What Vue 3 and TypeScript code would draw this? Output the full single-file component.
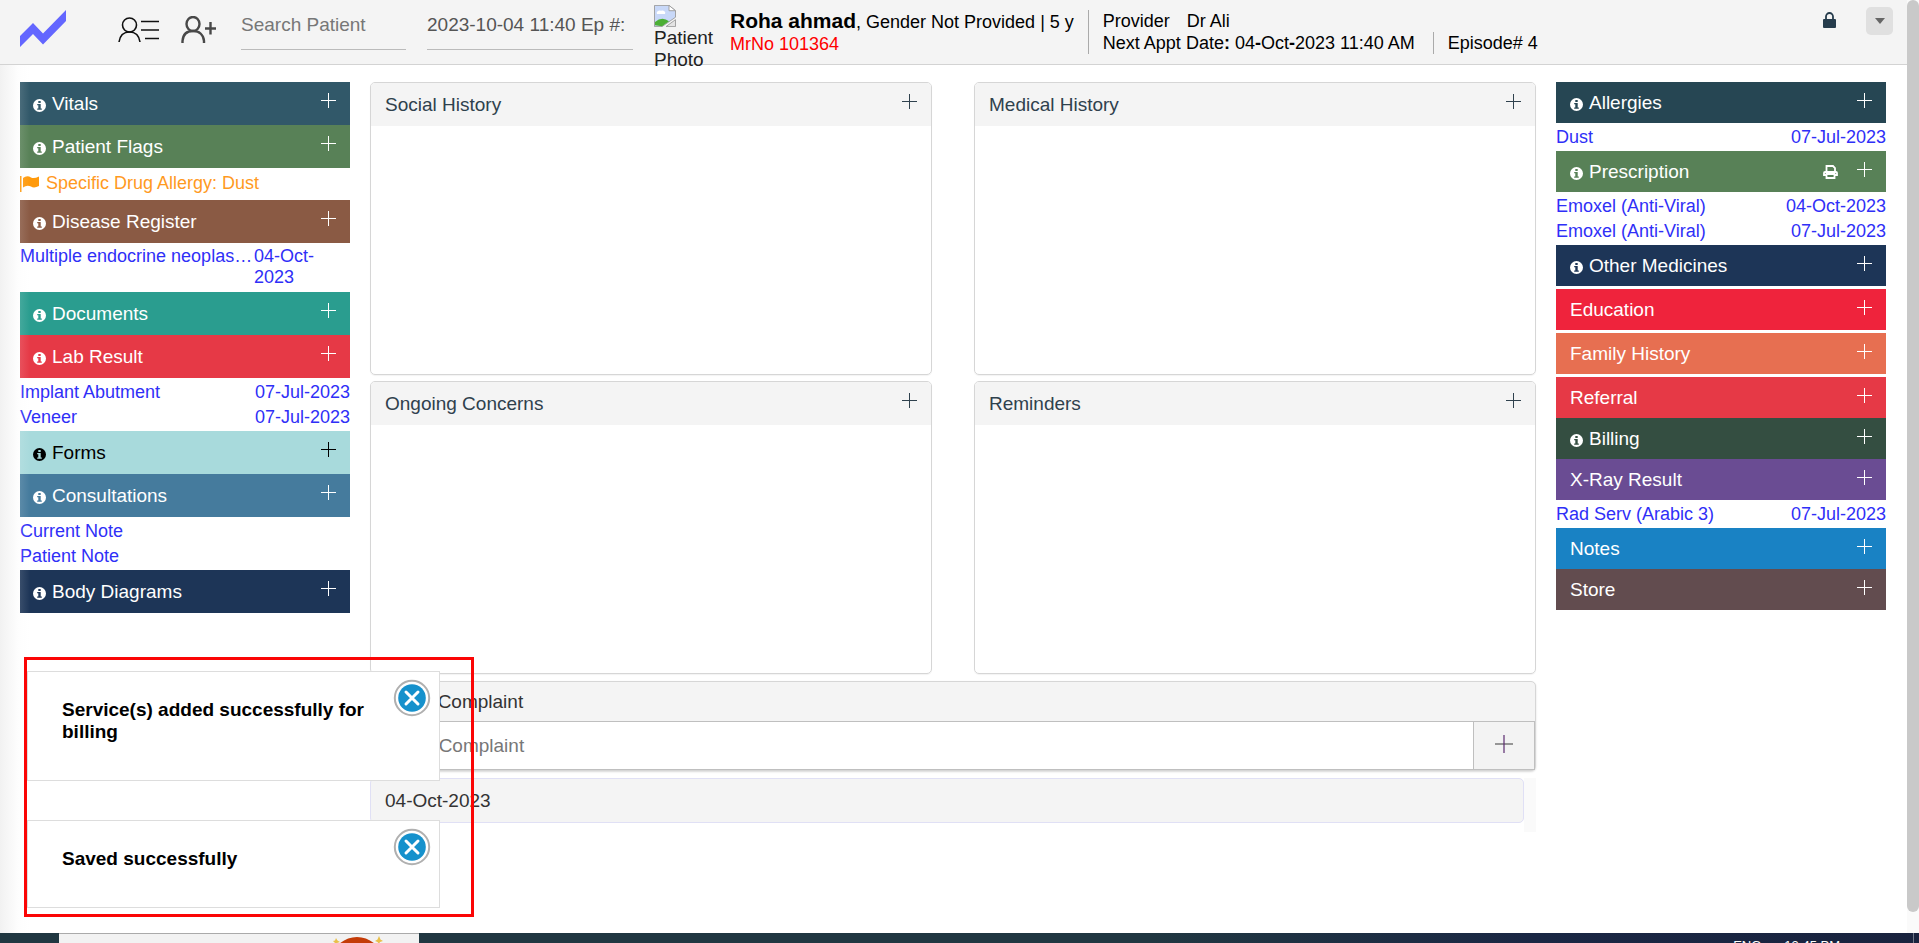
<script setup lang="ts">
import { ref } from 'vue'

interface Entry { name: string; date?: string; wrap?: boolean; flag?: boolean }
interface Section {
  title: string
  color: string
  info?: boolean
  dark?: boolean
  print?: boolean
  gap?: boolean
  entries?: Entry[]
}

const left: Section[] = [
  { title: 'Vitals', color: '#315869', info: true },
  { title: 'Patient Flags', color: '#588157', info: true, entries: [{ name: 'Specific Drug Allergy: Dust', flag: true }] },
  { title: 'Disease Register', color: '#8a5a44', info: true, entries: [{ name: 'Multiple endocrine neoplas…', date: '04-Oct-2023', wrap: true }] },
  { title: 'Documents', color: '#2a9d8f', info: true },
  { title: 'Lab Result', color: '#e63946', info: true, entries: [{ name: 'Implant Abutment', date: '07-Jul-2023' }, { name: 'Veneer', date: '07-Jul-2023' }] },
  { title: 'Forms', color: '#a8dadc', info: true, dark: true },
  { title: 'Consultations', color: '#457b9d', info: true, entries: [{ name: 'Current Note' }, { name: 'Patient Note' }] },
  { title: 'Body Diagrams', color: '#1d3557', info: true },
]

const right: Section[] = [
  { title: 'Allergies', color: '#264653', info: true, entries: [{ name: 'Dust', date: '07-Jul-2023' }] },
  { title: 'Prescription', color: '#588157', info: true, print: true, entries: [{ name: 'Emoxel (Anti-Viral)', date: '04-Oct-2023' }, { name: 'Emoxel (Anti-Viral)', date: '07-Jul-2023' }] },
  { title: 'Other Medicines', color: '#1d3557', info: true, gap: true },
  { title: 'Education', color: '#ef233c', gap: true },
  { title: 'Family History', color: '#e76f51', gap: true },
  { title: 'Referral', color: '#e63946' },
  { title: 'Billing', color: '#344e41', info: true },
  { title: 'X-Ray Result', color: '#6a4c93', entries: [{ name: 'Rad Serv (Arabic 3)', date: '07-Jul-2023' }] },
  { title: 'Notes', color: '#1982c4' },
  { title: 'Store', color: '#624c4f' },
]

const columns = [
  { side: 'left', sections: left },
  { side: 'right', sections: right },
]
const panels = ['Social History', 'Medical History', 'Ongoing Concerns', 'Reminders']
const toasts = ref<string[]>(['Service(s) added successfully for billing', 'Saved successfully'])
const search = ref('')
const episode = ref('2023-10-04 11:40 Ep #:')
const complaint = ref('')
</script>

<template>
  <div class="screen">
    <div class="app">
      <header class="topbar">
        <a href="#" class="logo" aria-label="Home">
          <svg width="46" height="37" viewBox="0 0 46 37"><path d="M0 26 13 13 23 23.500 46 0V11L23 34.500 13 24 0 37Z" fill="#6366ff" /></svg>
        </a>
        <button class="plain list" aria-label="Patient list">
          <svg width="42" height="26" viewBox="0 0 42 26" fill="none" stroke="#111" stroke-width="1.600"><ellipse cx="11.500" cy="8" rx="7" ry="7" /><path d="M1 25C2 18 6 15 11.500 15S21 18 22 25M23 4.500H41M23 13H41M27 21.500H41" /></svg>
        </button>
        <button class="plain add" aria-label="Add patient">
          <svg width="36" height="28" viewBox="0 0 36 28" fill="none" stroke="#484848" stroke-width="2.400"><ellipse cx="12" cy="8" rx="6.500" ry="7" /><path d="M1.500 27V25C2 18.500 6 15 12 15S22.500 18.500 23 25V27M29.500 6V18.500M24 12.500H35" /></svg>
        </button>
        <input v-model="search" class="field search" type="text" placeholder="Search Patient" aria-label="Search Patient" />
        <input v-model="episode" class="field episode" type="text" aria-label="Episode" />
        <div class="photo" role="img" aria-label="Patient Photo">
          <svg width="22" height="22" viewBox="0 0 22 27" preserveAspectRatio="none"><path d="M.5.500H15L21.500 7V15L8 26.500H.5Z" fill="#c8d8f8" stroke="#9a9a9a" /><path d="M15 .500V7H21.500Z" fill="#fff" stroke="#9a9a9a" /><path d="M3 11a3 3 0 0 1 4-4 3 3 0 0 1 4 4Z" fill="#fff" /><path d="M1 25V21Q8 13 15 20L8 26Z" fill="#4caf35" /><path d="M21.500 18V26.500H12Z" fill="#e4e4e4" stroke="#9a9a9a" /></svg>
          <span>Patient Photo</span>
        </div>
        <div class="patient">
          <div><strong>Roha ahmad</strong>, Gender Not Provided | 5 y</div>
          <div class="mr">MrNo 101364</div>
        </div>
        <div class="visit">
          <div><span class="provider">Provider</span>Dr Ali</div>
          <div class="line"><span>Next Appt Date<b>:</b> 04<b>-</b>Oct<b>-</b>2023 11:40 AM</span><span class="ep">Episode# 4</span></div>
        </div>
        <button class="plain lock" aria-label="Lock">
          <svg width="13" height="16" viewBox="0 0 13 16"><path d="M3 8V4.500a3.500 3.500 0 0 1 7 0V8" fill="none" stroke="#263c4c" stroke-width="1.800" /><rect y="7" width="13" height="9" rx="1" fill="#263c4c" /></svg>
        </button>
        <button class="menu" aria-label="Menu"><svg width="10" height="6" viewBox="0 0 10 6"><path d="M0 0H10L5 6Z" fill="#666" /></svg></button>
      </header>

      <main class="body">
        <aside v-for="col in columns" :key="col.side" :class="['side', col.side]">
          <section v-for="s in col.sections" :key="s.title" :class="{ gap: s.gap }">
            <h2 :class="['bar', { dark: s.dark }]" :style="{ backgroundColor: s.color }">
              <svg v-if="s.info" class="info" width="13" height="13" viewBox="0 0 13 13"><path fill="currentColor" fill-rule="evenodd" d="M6.500 0a6.500 6.500 0 1 0 0 13 6.500 6.500 0 0 0 0-13ZM5.300 2h2.400v1.900H5.300ZM4.200 5h3.500v4.500h1.100v1.300H4.200V9.500h1.100V6.300H4.200Z" /></svg>
              <span class="title">{{ s.title }}</span>
              <button v-if="s.print" class="plain" aria-label="Print">
                <svg width="15" height="14" viewBox="0 0 15 14" fill="none" stroke="currentColor" stroke-width="1.800"><path d="M3.500 7V1H10L12 3V7M3.500 10H1V8Q1 7 2 7H13Q14 7 14 8V10H12M3.500 9H11.500V13H3.500Z" /></svg>
              </button>
              <button class="plain plus" :aria-label="'Add ' + s.title"><svg width="15" height="15" viewBox="0 0 15 15"><path d="M7 0H8V7H15V8H8V15H7V8H0V7H7Z" fill="currentColor" /></svg></button>
            </h2>
            <ul v-if="s.entries" class="entries">
              <li v-for="(e, i) in s.entries" :key="i" :class="{ wrap: e.wrap, flagged: e.flag }">
                <svg v-if="e.flag" width="19" height="17" viewBox="0 0 19 17"><path d="M0 1H1.500V17H0ZM3 3Q7 0 11 2.500 14 4 19 1.500V11Q14 13.500 11 11.500 7 9.500 3 12.500Z" fill="#ff9a0c" /></svg>
                <a href="#" class="name">{{ e.name }}</a>
                <a v-if="e.date" href="#" class="date">{{ e.date }}</a>
              </li>
            </ul>
          </section>
        </aside>

        <div class="center">
          <div class="panels">
            <section v-for="p in panels" :key="p" class="panel">
              <h2>{{ p }}<button class="plain plus" :aria-label="'Add ' + p"><svg width="15" height="15" viewBox="0 0 15 15"><path d="M7 0H8V7H15V8H8V15H7V8H0V7H7Z" fill="currentColor" /></svg></button></h2>
            </section>
          </div>
          <section class="complaint">
            <label for="complaint">Chief Complaint</label>
            <div class="entry">
              <input id="complaint" v-model="complaint" type="text" placeholder="Chief Complaint" />
              <button aria-label="Add complaint"><svg width="18" height="18" viewBox="0 0 18 18"><path d="M0 9H18" stroke="#777" stroke-width="1.500" /><path d="M9 0V18" stroke="#5b2b70" stroke-width="1.200" /></svg></button>
            </div>
          </section>
          <div class="history"><div class="day">04-Oct-2023</div></div>
        </div>
      </main>
      <div class="scroll"><div class="thumb"></div></div>
      <div class="shade"></div>
      <div class="notices">
        <div v-for="(t, i) in toasts" :key="t" class="toast" role="status">
          <p>{{ t }}</p>
          <button class="plain close" aria-label="Close" @click="toasts.splice(i, 1)">
            <svg width="38" height="38" viewBox="0 0 38 38"><circle cx="19" cy="19" r="17.200" fill="#fff" stroke="#b0b0b0" stroke-width="2" /><circle cx="19" cy="19" r="13.800" fill="#1691cc" /><path d="M13 13 25 25M25 13 13 25" stroke="#fff" stroke-width="3" stroke-linecap="round" /></svg>
          </button>
        </div>
      </div>
    </div>

    <footer class="taskbar">
      <div class="find">
        <svg width="52" height="10" viewBox="0 0 52 10"><path d="M6 10Q14 3 24 3T42 10Z" fill="#c43c08" /><path d="M3 4 4.500 6.500 7 8 4 9 3 10 1 8 0 7 2 6.500ZM46 2 47.500 5.500 50 7 47 8 46 10 44.500 8 42 7 44.500 5.500Z" fill="#e9c04a" /></svg>
      </div>
      <div class="tray"><span>ENG</span><span>12:45 PM</span></div>
      <div class="desktop"></div>
    </footer>
  </div>
</template>

<style>
html, body { margin: 0; background: #fff; overflow: hidden; }
</style>

<style scoped>
* { box-sizing: border-box; }
.screen { height: 100vh; display: flex; flex-direction: column; font-family: "Liberation Sans", Arial, sans-serif; font-size: 18px; color: #000; }
.app { position: relative; flex: 1; min-height: 0; padding-right: 12px; overflow: hidden; }
button, input { font: inherit; color: inherit; }
.plain { border: 0; padding: 0; background: none; display: flex; cursor: pointer; }
a { color: #2f2ff7; text-decoration: none; }
h2, p, ul { margin: 0; padding: 0; font-weight: normal; }

.topbar { height: 65px; background: #f4f4f4; border-bottom: 1px solid #d3d3d3; display: flex; align-items: flex-start; padding: 0 14px 0 20px; }
.logo { margin-top: 10px; width: 98px; height: 37px; }
.list { margin: 17px 21px 0 0; }
.add { margin: 16px 24px 0 0; }
.field { border: 0; border-bottom: 1px solid #bbb; border-radius: 0; background: none; height: 50px; padding: 0; font-size: 19px; color: #555; outline: 0; }
.field::placeholder { color: #777; opacity: 1; }
.search { width: 165px; margin-right: 21px; }
.episode { width: 206px; margin-right: 21px; }
.photo { width: 62px; margin: 5px 14px 0 0; line-height: 22px; font-size: 19px; color: #222; }
.photo svg { display: block; }
.photo span { display: block; }
.patient, .visit { line-height: 22px; margin-top: 10px; white-space: nowrap; }
.patient strong { font-size: 21px; }
.patient { padding-right: 14px; }
.mr { color: #f00; }
.visit { border-left: 1px solid #aaa; padding-left: 14px; min-height: 44px; }
.provider { margin-right: 17px; }
.line { display: flex; }
.ep { border-left: 1px solid #aaa; margin-left: 18px; padding-left: 14px; }
.lock { margin: 12px 30px 0 auto; }
.menu { width: 27px; height: 28px; margin-top: 7px; border: 0; border-radius: 5px; background: #e0e0e0; padding: 0; }
.menu svg { display: block; margin: auto; }

.body { display: grid; grid-template-columns: 330px minmax(0, 1fr) 330px; column-gap: 20px; padding: 17px 21px 0 20px; align-items: start; }
.left { grid-column: 1; grid-row: 1; }
.right { grid-column: 3; grid-row: 1; }
.center { grid-column: 2; grid-row: 1; }
.gap { margin-bottom: 3px; }
.bar { display: flex; align-items: center; height: 43px; padding: 0 14px 0 13px; color: #fff; font-size: 19px; }
.right .bar { height: 41px; padding-top: 1px; padding-left: 14px; }
.bar.dark { color: #000; }
.info { margin: 3px 6px 0 0; }
.title { flex: 1; }
.bar .plus { margin: 0 0 6px 19px; }
.entries { list-style: none; padding: 2px 0 1px; }
.entries li { display: flex; justify-content: space-between; align-items: center; height: 25px; line-height: 25px; white-space: nowrap; }
.entries .flagged { justify-content: flex-start; gap: 7px; height: 29px; padding-bottom: 2px; }
.flagged a { color: #ff9a1f; }
.entries .wrap { align-items: flex-start; height: 46px; line-height: 21px; padding-top: 1px; }
.wrap .date { white-space: normal; width: 96px; }

.panels { display: grid; grid-template-columns: 1fr 1fr; gap: 6px 42px; }
.panel { height: 293px; border: 1px solid #d6d6d6; border-radius: 5px; box-shadow: 0 1px 1px rgba(0, 0, 0, .05); }
.panel h2 { height: 43px; padding: 0 14px; display: flex; align-items: center; justify-content: space-between; background: #f4f4f4; color: #2f414d; font-size: 19px; border-radius: 4px 4px 0 0; }
.panel .plus { margin-bottom: 6px; }
.complaint { margin-top: 7px; border: 1px solid #d6d6d6; border-radius: 5px; background: #f4f4f4; font-size: 19px; color: #333; box-shadow: 0 1px 2px rgba(0, 0, 0, .15); }
.complaint label { display: block; padding: 0 17px; height: 39px; line-height: 39px; }
.entry { display: flex; height: 49px; border: 1px solid #bfbfbf; border-left: 0; }
.entry input { flex: 1; min-width: 0; border: 0; border-right: 1px solid #bfbfbf; padding: 0 18px; outline: 0; background: #fff; }
.entry input::placeholder { color: #777; opacity: 1; }
.entry button { width: 60px; border: 0; padding: 0 0 4px; background: #f3f3f3; }
.entry svg { display: block; margin: auto; }
.history { margin-top: 7px; height: 54px; padding-right: 12px; background: linear-gradient(to left, #fafafa 12px, transparent 12px); }
.day { height: 45px; line-height: 43px; border: 1px solid #e0e0f5; border-radius: 5px; background: #f4f4f4; padding-left: 14px; font-size: 19px; color: #333; }

.scroll { position: absolute; top: 0; right: 0; bottom: 0; width: 12px; background: #fafafa; padding-bottom: 21px; }
.thumb { height: 100%; background: #c9c9c9; border-radius: 6px; }
.shade { position: absolute; left: 0; top: 65px; bottom: 0; width: 30px; pointer-events: none; background: linear-gradient(to right, rgba(240, 240, 240, .9), rgba(245, 245, 245, .15) 60%, transparent); }
.notices { position: absolute; left: 24px; bottom: 16px; width: 450px; border: 3px solid #fb0505; padding: 11px 31px 6px 0; display: flex; flex-direction: column; gap: 39px; }
.toast { position: relative; background: #fff; border: 1px solid #ddd; padding: 27px 56px 37px 34px; }
.toast p { font-size: 19px; line-height: 22px; font-weight: bold; min-height: 22px; }
.close { position: absolute; top: 7px; right: 8px; }

.taskbar { height: 10px; overflow: hidden; display: flex; align-items: flex-start; background: linear-gradient(to right, #203741, #203741 60%, #1a2744 80%, #19233e); }
.find { width: 360px; height: 10px; margin-left: 59px; background: #f2f2f2; border-top: 1px solid #aaa; padding-left: 274px; }
.find svg { display: block; }
.tray { display: flex; gap: 23px; margin: 0 73px 0 auto; padding-top: 5px; color: #fff; font-size: 13px; line-height: 16px; }
.desktop { width: 6px; height: 10px; border-left: 1px solid #6f7788; }
</style>
